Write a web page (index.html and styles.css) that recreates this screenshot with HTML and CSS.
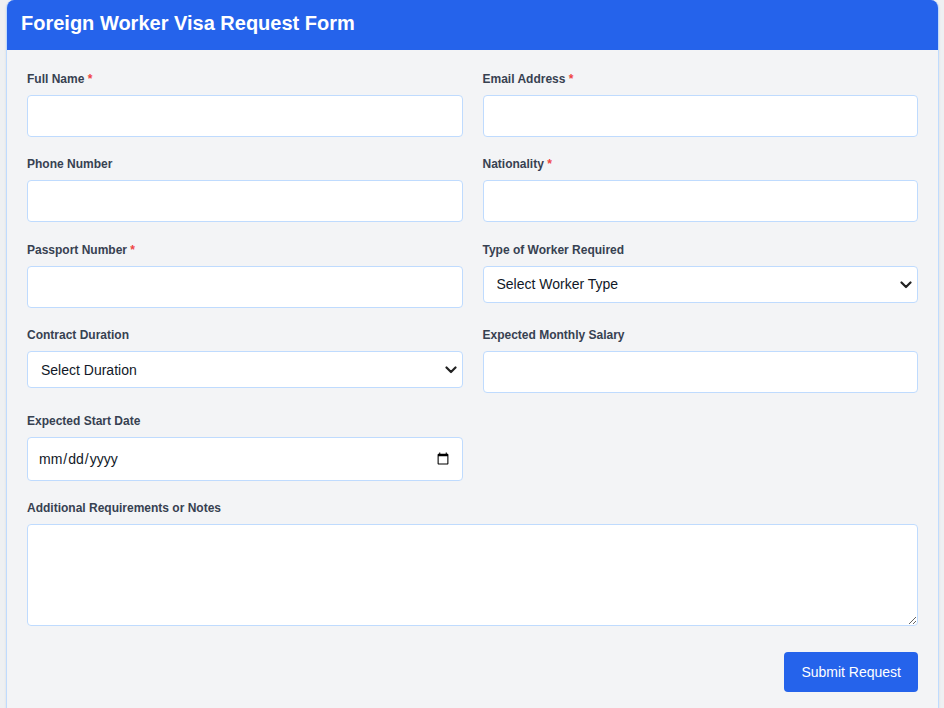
FILE: index.html
```html
<!DOCTYPE html>
<html lang="en">
<head>
<meta charset="utf-8">
<title>Foreign Worker Visa Request Form</title>
<link rel="stylesheet" href="styles.css">
</head>
<body>
<div class="card">
  <div class="card-header">
    <h1 class="title">Foreign Worker Visa Request Form</h1>
  </div>
  <form class="form">
    <div class="grid">
      <div class="field">
        <label class="label">Full Name <span class="req">*</span></label>
        <input class="input" type="text">
      </div>
      <div class="field">
        <label class="label">Email Address <span class="req">*</span></label>
        <input class="input" type="email">
      </div>
      <div class="field">
        <label class="label">Phone Number</label>
        <input class="input" type="tel">
      </div>
      <div class="field">
        <label class="label">Nationality <span class="req">*</span></label>
        <input class="input" type="text">
      </div>
      <div class="field">
        <label class="label">Passport Number <span class="req">*</span></label>
        <input class="input" type="text">
      </div>
      <div class="field">
        <label class="label">Type of Worker Required</label>
        <div class="select-wrap">
          <select class="select">
            <option>Select Worker Type</option>
          </select>
          <svg class="chevron" width="12" height="8" viewBox="0 0 12 8" aria-hidden="true"><path d="M1.5 1.5 L6 6 L10.5 1.5" fill="none" stroke="#222" stroke-width="2.2" stroke-linecap="round" stroke-linejoin="round"/></svg>
        </div>
      </div>
      <div class="field">
        <label class="label">Contract Duration</label>
        <div class="select-wrap">
          <select class="select">
            <option>Select Duration</option>
          </select>
          <svg class="chevron" width="12" height="8" viewBox="0 0 12 8" aria-hidden="true"><path d="M1.5 1.5 L6 6 L10.5 1.5" fill="none" stroke="#222" stroke-width="2.2" stroke-linecap="round" stroke-linejoin="round"/></svg>
        </div>
      </div>
      <div class="field">
        <label class="label">Expected Monthly Salary</label>
        <input class="input" type="text">
      </div>
      <div class="field">
        <label class="label">Expected Start Date</label>
        <input class="input date" type="date">
      </div>
      <div class="field"></div>
      <div class="field wide">
        <label class="label">Additional Requirements or Notes</label>
        <textarea class="textarea"></textarea>
      </div>
    </div>
    <div class="actions">
      <button type="button" class="btn">Submit Request</button>
    </div>
  </form>
</div>
</body>
</html>
```
FILE: styles.css
```css
* { box-sizing: border-box; }
html, body { margin: 0; padding: 0; }
body {
  background: #eef0f2;
  font-family: "Liberation Sans", Arial, sans-serif;
  padding: 0 5px 0 6px;
}
.card {
  background: #f3f4f6;
  border: 1px solid #bfdbfe;
  border-top: 0;
  border-radius: 8px;
  overflow: hidden;
  box-shadow: 0 1px 3px rgba(0,0,0,0.08);
}
.card-header {
  background: #2563eb;
  height: 50px;
  padding: 0 14px 4px;
  display: flex;
  align-items: center;
}
.title {
  margin: 0;
  color: #fff;
  font-size: 20px;
  font-weight: 700;
}
.form {
  padding: 21px 20px 24px;
}
.grid {
  display: grid;
  grid-template-columns: 1fr 1fr;
  column-gap: 20px;
  row-gap: 19.4px;
}
.field { display: flex; flex-direction: column; align-items: stretch; }
.wide { grid-column: 1 / span 2; }
.label {
  display: block;
  font-size: 12px;
  line-height: 16px;
  font-weight: 700;
  color: #374151;
  margin-bottom: 8px;
}
.req { color: #ef4444; }
.input, .select, .textarea {
  width: 100%;
  background: #fff;
  border: 1px solid #bfdbfe;
  border-radius: 4px;
  font-family: "Liberation Sans", Arial, sans-serif;
  font-size: 14px;
  color: #111827;
  outline: none;
}
.input { height: 42px; padding: 0 12px; }
.date { height: 44px; padding: 0 10px; }
.select-wrap { position: relative; }
.select {
  display: block;
  height: 37px;
  padding: 0 30px 0 13px;
  appearance: none;
  -webkit-appearance: none;
}
.chevron {
  position: absolute;
  right: 6px;
  top: 15px;
  pointer-events: none;
}
.textarea { height: 102px; padding: 10px 12px; resize: vertical; display: block; }
.actions {
  display: flex;
  justify-content: flex-end;
  margin-top: 26px;
}
.btn {
  background: #2563eb;
  color: #fff;
  border: none;
  border-radius: 4px;
  height: 40px;
  padding: 0 17px;
  font-family: "Liberation Sans", Arial, sans-serif;
  font-size: 14px;
  cursor: pointer;
}
```
